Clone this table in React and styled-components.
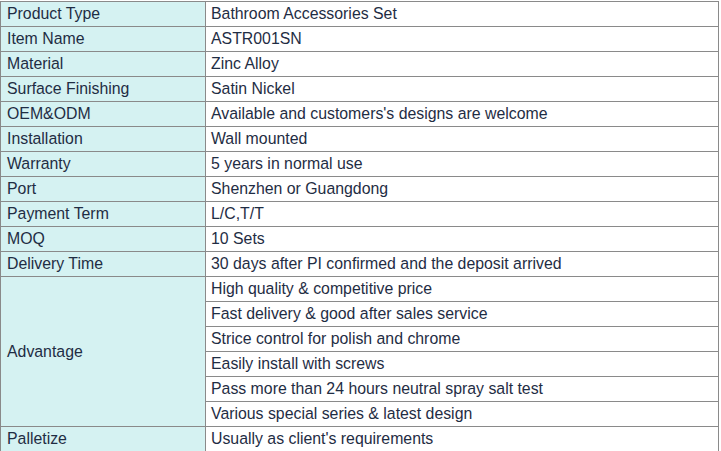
import React from 'react';
import styled, { createGlobalStyle } from 'styled-components';

const Global = createGlobalStyle`
  body {
    margin: 0;
    padding-top: 1px;
    background: #ffffff;
    font-family: "Liberation Sans", Arial, sans-serif;
  }
`;

const Table = styled.table`
  border-collapse: collapse;
  width: 719px;
  table-layout: fixed;
  border: 1px solid #000;
  color: #1f2d44;
  font-size: 15.85px;
`;

const Label = styled.td`
  width: 198px;
  background: #d5f2f2;
  border: 1px solid #8a8a8a;
  padding: 0 0 0 6px;
  height: 24px;
  line-height: 24px;
  vertical-align: middle;
`;

const Value = styled.td`
  background: #fff;
  border: 1px solid #8a8a8a;
  padding: 0 0 0 5px;
  height: 24px;
  line-height: 24px;
`;

const rows = [
  ['Product Type', 'Bathroom Accessories Set'],
  ['Item Name', 'ASTR001SN'],
  ['Material', 'Zinc Alloy'],
  ['Surface Finishing', 'Satin Nickel'],
  ['OEM&ODM', "Available and customers's designs are welcome"],
  ['Installation', 'Wall mounted'],
  ['Warranty', '5 years in normal use'],
  ['Port', 'Shenzhen or Guangdong'],
  ['Payment Term', 'L/C,T/T'],
  ['MOQ', '10 Sets'],
  ['Delivery Time', '30 days after PI confirmed and the deposit arrived'],
];

const advantages = [
  'High quality & competitive price',
  'Fast delivery & good after sales service',
  'Strice control for polish and chrome',
  'Easily install with screws',
  'Pass more than 24 hours neutral spray salt test',
  'Various special series & latest design',
];

export default function App() {
  return (
    <>
      <Global />
      <Table>
        <tbody>
          {rows.map(([k, v]) => (
            <tr key={k}>
              <Label>{k}</Label>
              <Value>{v}</Value>
            </tr>
          ))}
          {advantages.map((a, i) => (
            <tr key={a}>
              {i === 0 && <Label rowSpan={advantages.length}>Advantage</Label>}
              <Value>{a}</Value>
            </tr>
          ))}
          <tr>
            <Label>Palletize</Label>
            <Value>Usually as client's requirements</Value>
          </tr>
        </tbody>
      </Table>
    </>
  );
}
